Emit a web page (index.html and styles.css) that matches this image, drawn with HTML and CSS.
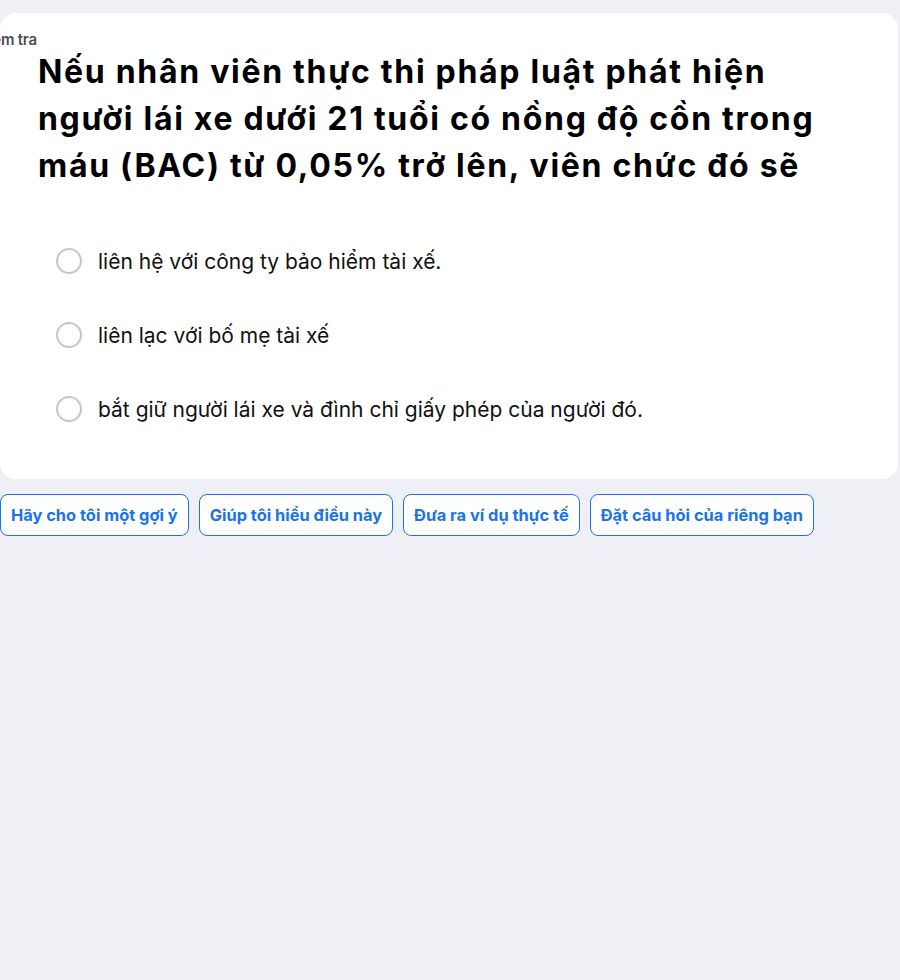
FILE: index.html
```html
<!DOCTYPE html>
<html lang="vi">
<head>
<meta charset="utf-8">
<link rel="stylesheet" href="styles.css">
</head>
<body>
<div class="page">
  <section class="card">
    <div class="label">Kiểm tra</div>
    <h1 class="question">Nếu nhân viên thực thi pháp luật phát hiện người lái xe dưới 21 tuổi có nồng độ cồn trong máu (BAC) từ 0,05% trở lên, viên chức đó sẽ</h1>
    <ul class="options">
      <li class="option"><span class="radio"></span><span class="opt-text">liên hệ với công ty bảo hiểm tài xế.</span></li>
      <li class="option"><span class="radio"></span><span class="opt-text">liên lạc với bố mẹ tài xế</span></li>
      <li class="option"><span class="radio"></span><span class="opt-text">bắt giữ người lái xe và đình chỉ giấy phép của người đó.</span></li>
    </ul>
  </section>
  <div class="actions">
    <button class="chip">Hãy cho tôi một gợi ý</button>
    <button class="chip">Giúp tôi hiểu điều này</button>
    <button class="chip">Đưa ra ví dụ thực tế</button>
    <button class="chip">Đặt câu hỏi của riêng bạn</button>
  </div>
</div>
</body>
</html>
```

FILE: styles.css
```css
* { box-sizing: border-box; }
html, body { margin: 0; padding: 0; }
body {
  background: #eff0f5;
  font-family: Inter, "Noto Sans", sans-serif;
  color: #000;
  width: 900px;
  height: 980px;
  overflow: hidden;
}
.page {
  padding-top: 13px;
  width: 898px;
}
.card {
  background: #fff;
  border-radius: 16px;
  padding: 19px 38px 42px 38px;
  height: 466px;
}
.label {
  font-size: 15px;
  font-weight: 600;
  color: #4d4d55;
  margin-left: -60px;
  line-height: 16px;
  letter-spacing: -0.2px;
}
.question {
  margin: 0;
  font-size: 32px;
  line-height: 47px;
  font-weight: 700;
  letter-spacing: 1.7px;
}
.options {
  list-style: none;
  margin: 59px 0 0 0;
  padding: 0 0 0 18px;
  display: flex;
  flex-direction: column;
  gap: 48px;
}
.option {
  display: flex;
  align-items: center;
  gap: 16px;
  height: 26px;
}
.radio {
  width: 26px;
  height: 26px;
  border: 2px solid #c5c6d2;
  border-radius: 50%;
  flex: none;
}
.opt-text {
  font-size: 21px;
  color: #111;
}
.actions {
  display: flex;
  gap: 10px;
  margin-top: 15px;
}
.chip {
  height: 42px;
  padding: 0 10px;
  background: #fff;
  border: 1px solid #1a73e8;
  border-radius: 8px;
  color: #1a73e8;
  font-family: Inter, "Noto Sans", sans-serif;
  font-size: 16.4px;
  font-weight: 700;
}
```
